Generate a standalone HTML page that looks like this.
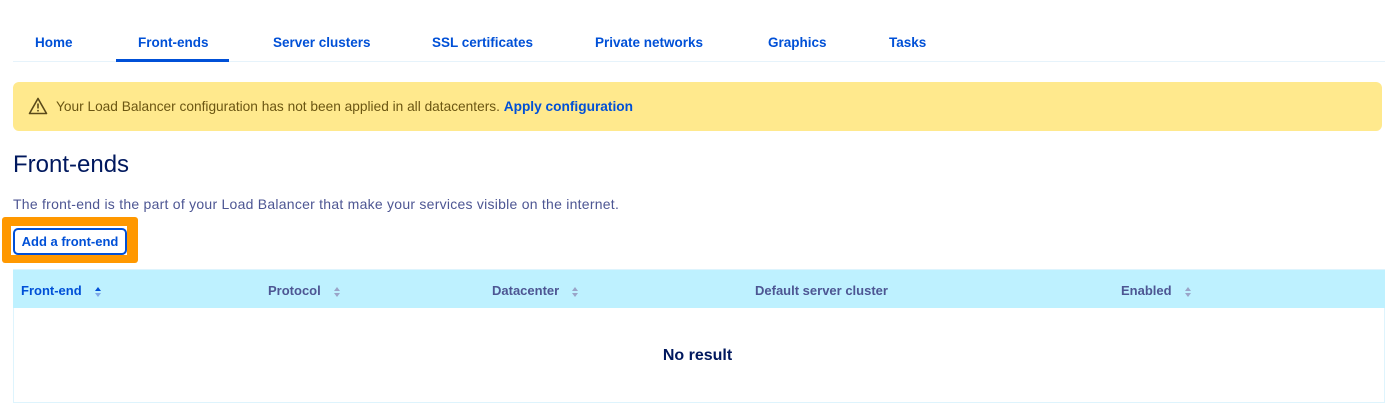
<!DOCTYPE html>
<html><head><style>
body{margin:0;width:1400px;height:418px;background:#fff;font-family:"Liberation Sans",sans-serif;position:relative;overflow:hidden}
.a{position:absolute;white-space:nowrap}
.nav{font-size:13.5px;font-weight:bold;color:#0050d7;top:35px}
.s{display:inline-block;vertical-align:middle;margin-left:12px}
</style></head><body>
<div class="a nav" style="left:35px">Home</div>
<div class="a nav" style="left:138px">Front-ends</div>
<div class="a nav" style="left:273px">Server clusters</div>
<div class="a nav" style="left:432px">SSL certificates</div>
<div class="a nav" style="left:595px">Private networks</div>
<div class="a nav" style="left:768px">Graphics</div>
<div class="a nav" style="left:889px">Tasks</div>
<div class="a" style="left:13px;top:61px;width:1372px;height:1px;background:#e6f3fb"></div>
<div class="a" style="left:116px;top:59px;width:113px;height:3px;background:#0050d7"></div>
<div class="a" style="left:13px;top:82px;width:1369px;height:49px;background:#ffe98d;border-radius:6px"></div>
<svg class="a" style="left:28px;top:97px" width="20" height="18" viewBox="0 0 20 18"><path d="M10 1.5L18.5 16.5H1.5Z" fill="none" stroke="#5a4a1a" stroke-width="1.6" stroke-linejoin="round"/><path d="M10 6.5V11.5" stroke="#5a4a1a" stroke-width="1.6"/><circle cx="10" cy="13.7" r="0.9" fill="#5a4a1a"/></svg>
<div class="a" style="left:56px;top:99px;font-size:13.7px;color:#6b5612">Your Load Balancer configuration has not been applied in all datacenters. <b style="color:#0050d7">Apply configuration</b></div>
<div class="a" style="left:13px;top:151px;font-size:24px;color:#00185e">Front-ends</div>
<div class="a" style="left:13px;top:196px;font-size:14px;color:#4d5693;letter-spacing:0.25px">The front-end is the part of your Load Balancer that make your services visible on the internet.</div>
<div class="a" style="left:2px;top:217px;width:136px;height:46px;background:#ff9800;border-radius:3px"></div>
<div class="a" style="left:11px;top:226px;width:116px;height:29px;background:#fff"></div>
<div class="a" style="left:13px;top:228px;width:110px;height:23px;border:2px solid #0050d7;border-radius:5px;background:#fff;font-size:13px;font-weight:bold;color:#0050d7;text-align:center;line-height:23px">Add a front-end</div>
<div class="a" style="left:13px;top:269px;width:1372px;height:134px;border:1px solid #def4fd;box-sizing:border-box"></div>
<div class="a" style="left:13px;top:270px;width:1372px;height:38px;background:#bef1ff"></div>
<div class="a" style="left:21px;top:283px;font-size:13px;font-weight:bold;color:#0050d7">Front-end<svg class="s" width="8" height="12" viewBox="0 0 8 12"><path d="M4 1L7 5H1Z" fill="#0050d7"/><path d="M4 11L7 7H1Z" fill="#7fa8e8"/></svg></div>
<div class="a" style="left:268px;top:283px;font-size:13px;font-weight:bold;color:#4d5693">Protocol<svg class="s" width="8" height="12" viewBox="0 0 8 12"><path d="M4 1L7 5H1Z M4 11L7 7H1Z" fill="#9aa4c8"/></svg></div>
<div class="a" style="left:492px;top:283px;font-size:13px;font-weight:bold;color:#4d5693">Datacenter<svg class="s" width="8" height="12" viewBox="0 0 8 12"><path d="M4 1L7 5H1Z M4 11L7 7H1Z" fill="#9aa4c8"/></svg></div>
<div class="a" style="left:755px;top:283px;font-size:13px;font-weight:bold;color:#4d5693">Default server cluster</div>
<div class="a" style="left:1121px;top:283px;font-size:13px;font-weight:bold;color:#4d5693">Enabled<svg class="s" width="8" height="12" viewBox="0 0 8 12"><path d="M4 1L7 5H1Z M4 11L7 7H1Z" fill="#9aa4c8"/></svg></div>
<div class="a" style="left:0;width:1395px;text-align:center;top:347px;font-size:16px;font-weight:bold;color:#00185e">No result</div>
</body></html>
